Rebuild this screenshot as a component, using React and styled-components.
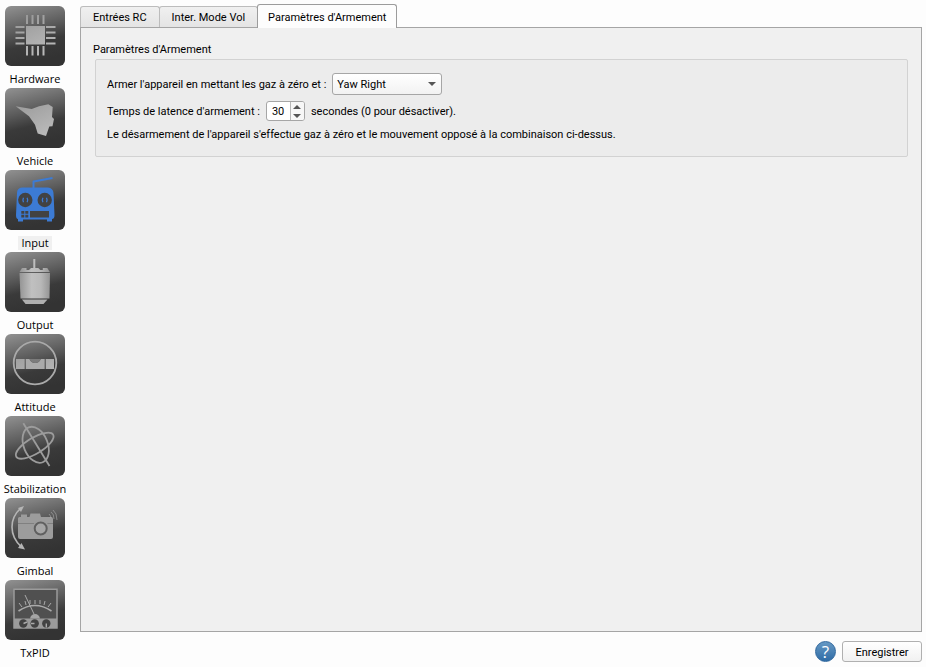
import React, { useState } from "react"
import styled, { createGlobalStyle } from "styled-components"

const GlobalStyle = createGlobalStyle`
  * {
    box-sizing: border-box;
  }
  body {
    margin: 0;
    background: #fdfdfd;
    color: #000;
    font: 11px/16px Roboto, Tahoma, sans-serif;
  }
  button, input, select {
    margin: 0;
    color: inherit;
    font: inherit;
  }
`

const Page = styled.div`
  display: flex;
  min-height: 100vh;
`

const Sidebar = styled.nav`
  display: flex;
  flex-direction: column;
  flex: 0 0 70px;
  min-width: 0;
  padding-top: 6px;
`

const ModeButton = styled.button`
  display: flex;
  flex-direction: column;
  align-items: center;
  width: 100%;
  height: 82px;
  padding: 0;
  border: 0;
  background: none;
  font-family: "Open Sans", "Segoe UI", sans-serif;
  line-height: 14px;
  white-space: nowrap;
  svg {
    flex: none;
  }
  span {
    margin-top: 6px;
    padding: 0 3px;
    background: ${props => (props.$active ? "#f0f0f0" : "none")};
  }
`

const Main = styled.main`
  display: flex;
  flex-direction: column;
  flex: 1;
  min-width: 0;
  padding: 4px 4px 0 10px;
`

const Tabs = styled.div`
  display: flex;
  align-items: flex-end;
  height: 23px;
`

const Tab = styled.button`
  z-index: 1;
  height: ${props => (props.$active ? 24 : 21)}px;
  margin-right: -1px;
  margin-bottom: ${props => (props.$active ? -1 : 0)}px;
  padding: 2px ${props => (props.$active ? 10 : 12)}px 0;
  border: 1px solid ${props => (props.$active ? "#9c9c9c" : "#bcbcbc")};
  border-bottom: 0;
  border-radius: 3px 3px 0 0;
  background: ${props =>
    props.$active ? "#fdfdfd" : "linear-gradient(#f0f0f0, #e4e4e4)"};
  white-space: nowrap;
`

const Panel = styled.div`
  flex: 1;
  padding: 14px 13px;
  border: 1px solid #a5a5a5;
  background: #f0f0f0;
`

const GroupTitle = styled.h2`
  margin: 0 0 1px -1px;
  font-size: 11px;
  font-weight: normal;
  line-height: 16px;
`

const Group = styled.div`
  display: flex;
  flex-direction: column;
  gap: 6px;
  margin-left: 1px;
  padding: 13px 11px;
  border: 1px solid #d2d2d2;
  border-radius: 2px;
  background: #ececec;
`

const Row = styled.div`
  display: flex;
  align-items: center;
  gap: 6px;
  label, span {
    padding-top: 2px;
  }
  p {
    margin: 0;
  }
`

const SelectBox = styled.div`
  position: relative;
  width: 110px;
  select {
    appearance: none;
    display: block;
    width: 100%;
    height: 22px;
    padding: 2px 20px 0 4px;
    border: 1px solid #a6a6a6;
    border-radius: 3px;
    background: linear-gradient(#ffffff, #f2f2f2);
  }
  svg {
    position: absolute;
    top: 9px;
    right: 6px;
    pointer-events: none;
  }
`

const SpinBox = styled.div`
  display: flex;
  width: 39px;
  height: 20px;
  border: 1px solid #a6a6a6;
  border-radius: 3px;
  background: #fff;
  overflow: hidden;
  input {
    appearance: textfield;
    flex: 1;
    min-width: 0;
    padding: 2px 0 0 5px;
    border: 0;
    background: none;
  }
  input::-webkit-inner-spin-button {
    appearance: none;
  }
`

const SpinArrows = styled.div`
  display: flex;
  flex-direction: column;
  width: 14px;
  border-left: 1px solid #b8b8b8;
  background: #f7f7f7;
`

const SpinArrow = styled.button`
  display: grid;
  flex: 1;
  place-items: center;
  padding: 0;
  border: 0;
  background: none;
`

const Footer = styled.footer`
  display: flex;
  align-items: center;
  justify-content: flex-end;
  gap: 6px;
  height: 35px;
  padding-top: 4px;
`

const HelpButton = styled.button`
  width: 21px;
  height: 21px;
  padding: 0;
  border: 1px solid #2f679d;
  border-radius: 50%;
  background: linear-gradient(#6799c4, #2f6ca6);
  color: #fff;
  font-family: "Open Sans", sans-serif;
  font-size: 17px;
  line-height: 19px;
`

const SaveButton = styled.button`
  width: 80px;
  height: 21px;
  padding: 2px 0 0;
  border: 1px solid #b0b0b0;
  border-radius: 3px;
  background: linear-gradient(#ffffff, #f1f1f1);
`

const HardwareIcon = () => (
  <g fill="url(#metal)">
    <rect x="21" y="20" width="19" height="18.5" />
    {[22, 27.5, 33, 38.5].map(x => (
      <path key={x} d={`M${x - 1} 9h2v9h-2zM${x - 1} 40h2v9.5h-2z`} />
    ))}
    {[21, 26.5, 32, 37.5].map(y => (
      <path key={y} d={`M10.5 ${y - 1}h9v2h-9zM41 ${y - 1}h9.5v2h-9.5z`} />
    ))}
  </g>
)

const VehicleIcon = () => (
  <path
    fill="url(#metal)"
    d="M10.7 18.3L26.7 21L34 18.3L43.3 16.3L47.7 19L47 29L49 31L47.5 38.3L44.3 38.5L41 48L32.7 45.5L30 36.7L24 28.3Z"
  />
)

const InputIcon = () => (
  <g>
    <path
      d="M28.5 18V11.5L47.5 8"
      fill="none"
      stroke="#3c7bd4"
      strokeWidth="2"
      strokeLinejoin="round"
    />
    <path
      fill="#3c7bd4"
      d="M17 17.5H43Q48 18 48.5 23L49.5 45Q49.5 49 47 49V51.5H42V49.5H18V51.5H13V49Q11 49 11 45L12 23Q12 18 17 17.5Z"
    />
    <g fill="#424242">
      <circle cx="20.3" cy="30" r="7.2" />
      <circle cx="39.7" cy="30" r="7.2" />
      <path d="M16.3 41h3v2.7h-3zM20.3 41h3v2.7h-3zM16.3 44.7h3v2.7h-3zM20.3 44.7h3v2.7h-3zM25 41h19v6.4H25z" />
    </g>
    <path
      d="M18.5 27.8q-1.2 2.2 0 4.4M22.1 27.8q1.2 2.2 0 4.4M37.9 27.8q-1.2 2.2 0 4.4M41.5 27.8q1.2 2.2 0 4.4"
      fill="none"
      stroke="#3c7bd4"
      strokeWidth="1.3"
    />
  </g>
)

const OutputIcon = () => (
  <g>
    <path
      fill="url(#steel)"
      d="M28.3 7h2v9h3l2 2h2.5v-2h4.5l2.5 4H14.5L17 16h4.5v2H24l2-2h2.3z"
    />
    <path fill="url(#steel)" d="M14.5 21H45L44.5 46.5H15.5Z" />
    <path fill="#b0b0b0" d="M17 47.5H42.5L38.5 52H20.5Z" />
  </g>
)

const AttitudeIcon = () => (
  <g>
    <circle
      cx="30"
      cy="29"
      r="21.3"
      fill="none"
      stroke="#aaa"
      strokeWidth="1.8"
    />
    <path fill="url(#metal)" d="M11 25h8.7v10H11zM40.7 25H49v10h-8.3z" />
    <path fill="#aaa" d="M20.7 25h3.8q1.5 4 5.6 4t5.7-4h3.9v10h-19z" />
    <path fill="#7c7c7c" d="M24.5 25h11.3q-1.6 4-5.7 4t-5.6-4z" />
  </g>
)

const StabilizationIcon = () => (
  <g fill="none" stroke="#9c9c9c" strokeWidth="1.8">
    <ellipse
      cx="30.7"
      cy="28.8"
      rx="12"
      ry="18.8"
      transform="rotate(-22 30.7 28.8)"
    />
    <ellipse
      cx="29.7"
      cy="29.7"
      rx="21.5"
      ry="8"
      transform="rotate(-31 29.7 29.7)"
    />
    <path d="M18.3 7.3L44.5 50" />
  </g>
)

const GimbalIcon = () => (
  <g>
    <path
      fill="#9c9c9c"
      d="M13 20.5q0-1.5 1.5-1.5H16v-2.5h6V19h2.5l1-3.5h9.5L36 19h10q2 0 2 2v18q0 2-2 2H15q-2 0-2-2z"
    />
    <path d="M13 25.5H48" stroke="#808080" />
    <circle cx="35.7" cy="30.5" r="8.5" fill="#9c9c9c" />
    <circle
      cx="35.7"
      cy="30.5"
      r="6"
      fill="#a6a6a6"
      stroke="#606060"
      strokeWidth="2"
    />
    <g fill="none" stroke="#b5b5b5">
      <path d="M16 10Q7 18 7 29T16 48.5" strokeWidth="1.6" />
      <path
        d="M46 20Q46 18 44 16M49 21Q49 16 46 14M52 22Q52 15 48 12"
        opacity="0.55"
      />
    </g>
    <path fill="#b5b5b5" d="M19 8L13 10l3 4zM20 51.5L13 50l3.5-5z" />
  </g>
)

const TxPidIcon = () => (
  <g>
    <path
      d="M9 9.3H52V48H9Z"
      fill="#505050"
      stroke="#9b9b9b"
      strokeWidth="1.5"
    />
    <path fill="#9b9b9b" d="M9 38.5h43V48H9z" />
    <g fill="none" stroke="#aaa">
      <path d="M13.5 31Q30 20 46.5 31" strokeWidth="1.6" />
      <path d="M14 23l3 4M20 21l1 4M25 20v4M30 20v4M35 20v4M40 21l-1 4M46 23l-3 4M20 15l9 19" />
    </g>
    <path fill="#a5a5a5" d="M25 38.5q1-4.5 5-4.5t5 4.5z" />
    <g fill="#424242">
      <circle cx="18.3" cy="43.5" r="4.2" />
      <circle cx="29.7" cy="43.5" r="4.2" />
      <circle cx="41.3" cy="43.5" r="4.2" />
    </g>
    <path
      d="M18.5 43.5L22 42M29.5 43.5H26M41.3 43.5v4"
      stroke="#aaa"
      strokeWidth="1.4"
    />
  </g>
)

const modes = [
  { name: "Hardware", Icon: HardwareIcon },
  { name: "Vehicle", Icon: VehicleIcon },
  { name: "Input", Icon: InputIcon },
  { name: "Output", Icon: OutputIcon },
  { name: "Attitude", Icon: AttitudeIcon },
  { name: "Stabilization", Icon: StabilizationIcon },
  { name: "Gimbal", Icon: GimbalIcon },
  { name: "TxPID", Icon: TxPidIcon },
]

const tabs = ["Entrées RC", "Inter. Mode Vol", "Paramètres d'Armement"]

const HiddenSvg = styled.svg`
  position: absolute;
`

// gradients shared by all of the sidebar icons
const IconDefs = () => (
  <HiddenSvg width="0" height="0" aria-hidden="true">
    <defs>
      <linearGradient id="tile" x1="0" y1="0" x2="0.25" y2="1">
        <stop offset="0" stopColor="#929292" />
        <stop offset="0.45" stopColor="#5c5c5c" />
        <stop offset="0.7" stopColor="#3a3a3a" />
        <stop offset="1" stopColor="#333" />
      </linearGradient>
      <linearGradient
        id="metal"
        gradientUnits="userSpaceOnUse"
        x1="15"
        y1="9"
        x2="35"
        y2="50"
      >
        <stop offset="0" stopColor="#979797" />
        <stop offset="1" stopColor="#bababa" />
      </linearGradient>
      <linearGradient id="steel" x1="0" y1="0" x2="1" y2="0">
        <stop offset="0" stopColor="#949494" />
        <stop offset="0.4" stopColor="#c0c0c0" />
        <stop offset="0.7" stopColor="#b8b8b8" />
        <stop offset="1" stopColor="#949494" />
      </linearGradient>
    </defs>
  </HiddenSvg>
)

const Triangle = ({ size, up }) => (
  <svg width={size} height={size / 2} viewBox="0 0 8 4" aria-hidden="true">
    <path d={up ? "M0 4L4 0L8 4Z" : "M0 0H8L4 4Z"} fill="#555" />
  </svg>
)

const App = () => {
  const [mode, setMode] = useState("Input")
  const [tab, setTab] = useState(tabs[2])
  const [delay, setDelay] = useState(30)

  return (
    <>
      <GlobalStyle />
      <IconDefs />
      <Page>
        <Sidebar>
          {modes.map(({ name, Icon }) => (
            <ModeButton
              key={name}
              $active={mode === name}
              onClick={() => setMode(name)}
            >
              <svg width="60" height="60" viewBox="0 0 60 60" aria-hidden="true">
                <rect width="60" height="60" rx="6" fill="url(#tile)" />
                <Icon />
              </svg>
              <span>{name}</span>
            </ModeButton>
          ))}
        </Sidebar>
        <Main>
          <Tabs role="tablist">
            {tabs.map(name => (
              <Tab
                key={name}
                role="tab"
                aria-selected={tab === name}
                $active={tab === name}
                onClick={() => setTab(name)}
              >
                {name}
              </Tab>
            ))}
          </Tabs>
          <Panel role="tabpanel">
            <GroupTitle>Paramètres d'Armement</GroupTitle>
            <Group>
              <Row>
                <label htmlFor="arming">
                  Armer l'appareil en mettant les gaz à zéro et :
                </label>
                <SelectBox>
                  <select id="arming" defaultValue="Yaw Right">
                    <option>Yaw Left</option>
                    <option>Yaw Right</option>
                  </select>
                  <Triangle size={8} />
                </SelectBox>
              </Row>
              <Row>
                <label htmlFor="delay">Temps de latence d'armement :</label>
                <SpinBox>
                  <input
                    id="delay"
                    type="number"
                    min="0"
                    value={delay}
                    onChange={e => setDelay(Number(e.target.value))}
                  />
                  <SpinArrows>
                    <SpinArrow
                      aria-label="Augmenter"
                      onClick={() => setDelay(delay + 1)}
                    >
                      <Triangle size={8} up />
                    </SpinArrow>
                    <SpinArrow
                      aria-label="Diminuer"
                      onClick={() => setDelay(Math.max(0, delay - 1))}
                    >
                      <Triangle size={8} />
                    </SpinArrow>
                  </SpinArrows>
                </SpinBox>
                <span>secondes (0 pour désactiver).</span>
              </Row>
              <Row>
                <p>
                  Le désarmement de l'appareil s'effectue gaz à zéro et le
                  mouvement opposé à la combinaison ci-dessus.
                </p>
              </Row>
            </Group>
          </Panel>
          <Footer>
            <HelpButton aria-label="Aide">?</HelpButton>
            <SaveButton>Enregistrer</SaveButton>
          </Footer>
        </Main>
      </Page>
    </>
  )
}

export default App
